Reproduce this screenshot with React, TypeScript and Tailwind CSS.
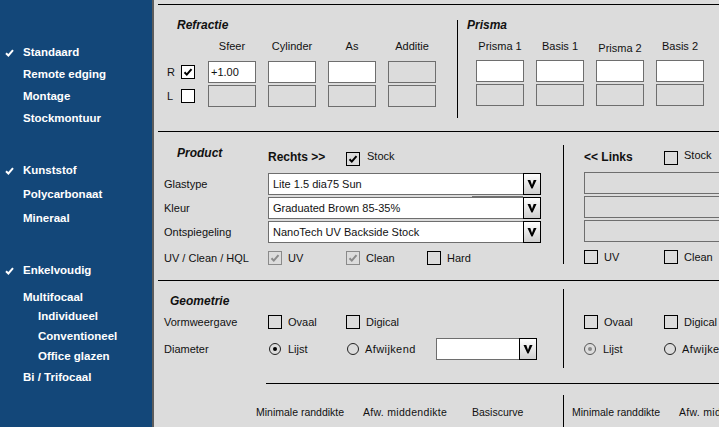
import React from "react";

type Tone = "white" | "plain" | "disabled";

function Tick({ color }: { color: string }) {
  return (
    <svg width="12" height="12" viewBox="0 0 12 12">
      <path d="M2.5 6.2 L4.8 8.6 L9.5 3.2" fill="none" stroke={color} strokeWidth="2" />
    </svg>
  );
}

function Checkbox({ checked = false, tone = "plain" }: { checked?: boolean; tone?: Tone }) {
  const cls =
    tone === "white"
      ? "border-black bg-white"
      : tone === "disabled"
      ? "border-[#8a8a8a] bg-transparent"
      : "border-black bg-transparent";
  return (
    <span className={`flex h-[14px] w-[14px] shrink-0 items-center justify-center border ${cls}`}>
      {checked && <Tick color={tone === "disabled" ? "#8a8a8a" : "#000"} />}
    </span>
  );
}

function Radio({ checked = false, disabled = false }: { checked?: boolean; disabled?: boolean }) {
  return (
    <span
      className={`flex h-[12px] w-[12px] shrink-0 items-center justify-center rounded-full border ${
        disabled ? "border-[#555]" : "border-[#222]"
      }`}
    >
      {checked && (
        <span className={`h-[4px] w-[4px] rounded-full ${disabled ? "bg-[#8a8a8a]" : "bg-black"}`} />
      )}
    </span>
  );
}

function Field({ value, active = false }: { value?: string; active?: boolean }) {
  return (
    <div
      className={`flex h-[22px] w-[48px] shrink-0 items-center border border-[#6e6e6e] pl-[2px] text-[11px] ${
        active ? "bg-white" : "bg-transparent"
      }`}
    >
      {value}
    </div>
  );
}

function Chevron() {
  return (
    <svg width="10" height="10" viewBox="0 0 10 10">
      <path d="M0.5 1 L3.3 1 L5 6 L6.7 1 L9.5 1 L5.6 9.5 L4.4 9.5 Z" fill="#000" />
    </svg>
  );
}

function Select({ value, width }: { value?: string; width: string }) {
  return (
    <div className={`flex h-[22px] shrink-0 ${width}`}>
      <div className="flex flex-1 items-center border border-r-0 border-[#6e6e6e] bg-white pl-[4px] text-[11px]">
        {value}
      </div>
      <div className="flex w-[18px] items-center justify-center border border-black bg-linear-to-b from-white to-[#cfcfcf]">
        <Chevron />
      </div>
    </div>
  );
}

function SideCheck() {
  return (
    <svg width="9" height="8" viewBox="0 0 9 8">
      <path d="M1 4.2 L3.4 6.5 L8 1.2" fill="none" stroke="#fff" strokeWidth="2" />
    </svg>
  );
}

function NavItem({ label, checked = false, sub = false, h }: { label: string; checked?: boolean; sub?: boolean; h: string }) {
  return (
    <div className={`flex items-center ${h}`}>
      <span className="flex w-[23px] pl-[5px]">{checked && <SideCheck />}</span>
      <span className={sub ? "pl-[15px]" : ""}>{label}</span>
    </div>
  );
}

function Sidebar() {
  return (
    <aside className="flex w-[154px] shrink-0 flex-col border-r-2 border-[#5c5c5c] bg-[#134779] pt-[42px] text-[11.5px] font-bold text-white">
      <NavItem h="h-[22px]" label="Standaard" checked />
      <NavItem h="h-[22px]" label="Remote edging" />
      <NavItem h="h-[22px]" label="Montage" />
      <NavItem h="h-[22px]" label="Stockmontuur" />
      <div className="mt-[29px]" />
      <NavItem h="h-[24px]" label="Kunststof" checked />
      <NavItem h="h-[24px]" label="Polycarbonaat" />
      <NavItem h="h-[24px]" label="Mineraal" />
      <div className="mt-[29px]" />
      <NavItem h="h-[22px]" label="Enkelvoudig" checked />
      <div className="mt-[7px]" />
      <NavItem h="h-[18px]" label="Multifocaal" />
      <NavItem h="h-[20px]" label="Individueel" sub />
      <NavItem h="h-[20px]" label="Conventioneel" sub />
      <NavItem h="h-[20px]" label="Office glazen" sub />
      <NavItem h="h-[22px]" label="Bi / Trifocaal" />
    </aside>
  );
}

function Refractie() {
  return (
    <section className="flex h-[127px] shrink-0 border-t border-black">
      {/* Refractie */}
      <div className="flex w-[299px] shrink-0 flex-col">
        <div className="mt-[13px] h-[14px] pl-[19px] text-[12px] font-bold italic leading-[14px]">Refractie</div>
        <div className="mt-[7px] flex h-[14px] gap-[12px] pl-[50px] text-[11px] leading-[14px]">
          {["Sfeer", "Cylinder", "As", "Additie"].map((t) => (
            <span key={t} className="w-[48px] text-center">{t}</span>
          ))}
        </div>
        <div className="mt-[8px] flex items-center pl-[9px] text-[11px]">
          <span className="w-[14px]">R</span>
          <Checkbox checked tone="white" />
          <div className="ml-[13px] flex gap-[12px]">
            <Field value="+1.00" active />
            <Field active />
            <Field active />
            <Field />
          </div>
        </div>
        <div className="mt-[2px] flex items-center pl-[9px] text-[11px]">
          <span className="w-[14px]">L</span>
          <Checkbox tone="white" />
          <div className="ml-[13px] flex gap-[12px]">
            <Field />
            <Field />
            <Field />
            <Field />
          </div>
        </div>
      </div>
      <div className="mt-[15px] h-[98px] w-px shrink-0 bg-black" />
      {/* Prisma */}
      <div className="flex min-w-0 flex-1 flex-col">
        <div className="mt-[13px] h-[14px] pl-[9px] text-[12px] font-bold italic leading-[14px]">Prisma</div>
        <div className="mt-[7px] flex h-[14px] gap-[12px] pl-[18px] text-[11px] leading-[14px]">
          <span className="w-[48px] shrink-0 text-center">Prisma 1</span>
          <span className="w-[48px] shrink-0 text-center">Basis 1</span>
          <span className="w-[48px] shrink-0 pt-[2px] text-center">Prisma 2</span>
          <span className="w-[48px] shrink-0 text-center">Basis 2</span>
        </div>
        <div className="mt-[7px] flex gap-[12px] pl-[18px]">
          <Field active />
          <Field active />
          <Field active />
          <Field active />
        </div>
        <div className="mt-[2px] flex gap-[12px] pl-[18px]">
          <Field />
          <Field />
          <Field />
          <Field />
        </div>
      </div>
    </section>
  );
}

function Product() {
  const rows = [
    ["Glastype", "Lite 1.5 dia75 Sun"],
    ["Kleur", "Graduated Brown 85-35%"],
    ["Ontspiegeling", "NanoTech UV Backside Stock"],
  ];
  return (
    <section className="flex h-[149px] shrink-0 border-t border-black text-[11px]">
      <div className="flex w-[405px] shrink-0 flex-col">
        <div className="mt-[14px] flex items-start">
          <span className="w-[110px] pl-[19px] text-[12px] font-bold italic leading-[14px]">Product</span>
          <span className="mt-[4px] w-[78px] text-[12px] font-bold leading-[14px]">{"Rechts >>"}</span>
          <span className="mt-[6px]">
            <Checkbox checked />
          </span>
          <span className="ml-[7px] mt-[3px] leading-[14px]">Stock</span>
        </div>
        {rows.map(([label, value], i) => (
          <div key={label} className={`relative flex items-center ${i === 0 ? "mt-[7px]" : "mt-[2px]"}`}>
            <span className="w-[110px] pl-[6px]">{label}</span>
            <Select value={value} width="w-[273px]" />
            {i === 1 && <div className="absolute -top-[1px] left-[314px] h-px w-[51px] bg-[#707070]" />}
          </div>
        ))}
        <div className="mt-[8px] flex h-[14px] items-center">
          <span className="w-[110px] pl-[6px]">UV / Clean / HQL</span>
          <span className="flex w-[78px] items-center gap-[6px]">
            <Checkbox checked tone="disabled" />
            UV
          </span>
          <span className="flex w-[81px] items-center gap-[6px]">
            <Checkbox checked tone="disabled" />
            Clean
          </span>
          <span className="flex items-center gap-[6px]">
            <Checkbox />
            Hard
          </span>
        </div>
      </div>
      <div className="mt-[13px] h-[119px] w-px shrink-0 bg-black" />
      <div className="flex min-w-0 flex-1 flex-col pl-[20px]">
        <div className="mt-[14px] flex items-start">
          <span className="mt-[4px] w-[80px] shrink-0 text-[12px] font-bold leading-[14px]">{"<< Links"}</span>
          <span className="mt-[5px]">
            <Checkbox />
          </span>
          <span className="ml-[6px] mt-[2px] leading-[14px]">Stock</span>
        </div>
        <div className="mt-[7px] h-[22px] w-[200px] shrink-0 border border-[#6e6e6e]" />
        <div className="mt-[2px] h-[22px] w-[200px] shrink-0 border border-[#6e6e6e]" />
        <div className="mt-[2px] h-[22px] w-[200px] shrink-0 border border-[#6e6e6e]" />
        <div className="mt-[8px] flex h-[14px] items-center">
          <span className="flex w-[80px] shrink-0 items-center gap-[6px]">
            <Checkbox />
            UV
          </span>
          <span className="flex items-center gap-[6px]">
            <Checkbox />
            Clean
          </span>
        </div>
      </div>
    </section>
  );
}

function Geometrie() {
  return (
    <section className="flex flex-1 flex-col border-t border-black text-[11px]">
      <div className="flex">
        <div className="flex w-[405px] shrink-0 flex-col">
          <div className="mt-[13px] h-[14px] pl-[12px] text-[12px] font-bold italic leading-[14px]">Geometrie</div>
          <div className="mt-[7px] flex h-[14px] items-center">
            <span className="w-[110px] pl-[6px]">Vormweergave</span>
            <span className="flex w-[78px] items-center gap-[6px]">
              <Checkbox />
              Ovaal
            </span>
            <span className="flex items-center gap-[6px]">
              <Checkbox />
              Digical
            </span>
          </div>
          <div className="mt-[9px] flex h-[22px] items-center">
            <span className="w-[110px] pl-[6px]">Diameter</span>
            <span className="flex w-[78px] items-center gap-[7px] pl-px">
              <Radio checked />
              Lijst
            </span>
            <span className="flex w-[90px] items-center gap-[6px] pl-px">
              <Radio />
              <span className="tracking-[0.4px]">Afwijkend</span>
            </span>
            <Select width="w-[101px]" />
          </div>
        </div>
        <div className="mt-[8px] h-[79px] w-px shrink-0 bg-black" />
        <div className="flex min-w-0 flex-1 flex-col pl-[20px]">
          <div className="mt-[34px] flex h-[14px] items-center">
            <span className="flex w-[80px] shrink-0 items-center gap-[6px]">
              <Checkbox />
              Ovaal
            </span>
            <span className="flex shrink-0 items-center gap-[6px]">
              <Checkbox />
              Digical
            </span>
          </div>
          <div className="mt-[9px] flex h-[22px] items-center">
            <span className="flex w-[80px] shrink-0 items-center gap-[7px]">
              <Radio checked disabled />
              Lijst
            </span>
            <span className="flex shrink-0 items-center gap-[6px]">
              <Radio />
              <span className="tracking-[0.4px]">Afwijkend</span>
            </span>
          </div>
        </div>
      </div>
      <div className="ml-[108px] mt-[15px] h-px shrink-0 bg-black" />
      <div className="mt-[11px] flex flex-1 text-[10.5px]">
        <div className="flex w-[405px] shrink-0 pl-[98px] pt-[10px] leading-[14px]">
          <span className="w-[107px] shrink-0">Minimale randdikte</span>
          <span className="w-[109px] shrink-0 tracking-[0.3px]">Afw. middendikte</span>
          <span>Basiscurve</span>
        </div>
        <div className="w-px shrink-0 bg-black" />
        <div className="flex min-w-0 flex-1 pl-[8px] pt-[10px] leading-[14px]">
          <span className="w-[107px] shrink-0">Minimale randdikte</span>
          <span className="shrink-0 tracking-[0.3px]">Afw. middendikte</span>
        </div>
      </div>
    </section>
  );
}

export default function App() {
  return (
    <div className="flex h-[427px] w-[719px] overflow-hidden font-['Liberation_Sans',Arial,sans-serif] text-[#111]">
      <Sidebar />
      <main className="flex min-w-0 flex-1 flex-col overflow-hidden bg-[#dcdcdc] pl-[4px] pt-[4px]">
        <Refractie />
        <Product />
        <Geometrie />
      </main>
    </div>
  );
}
